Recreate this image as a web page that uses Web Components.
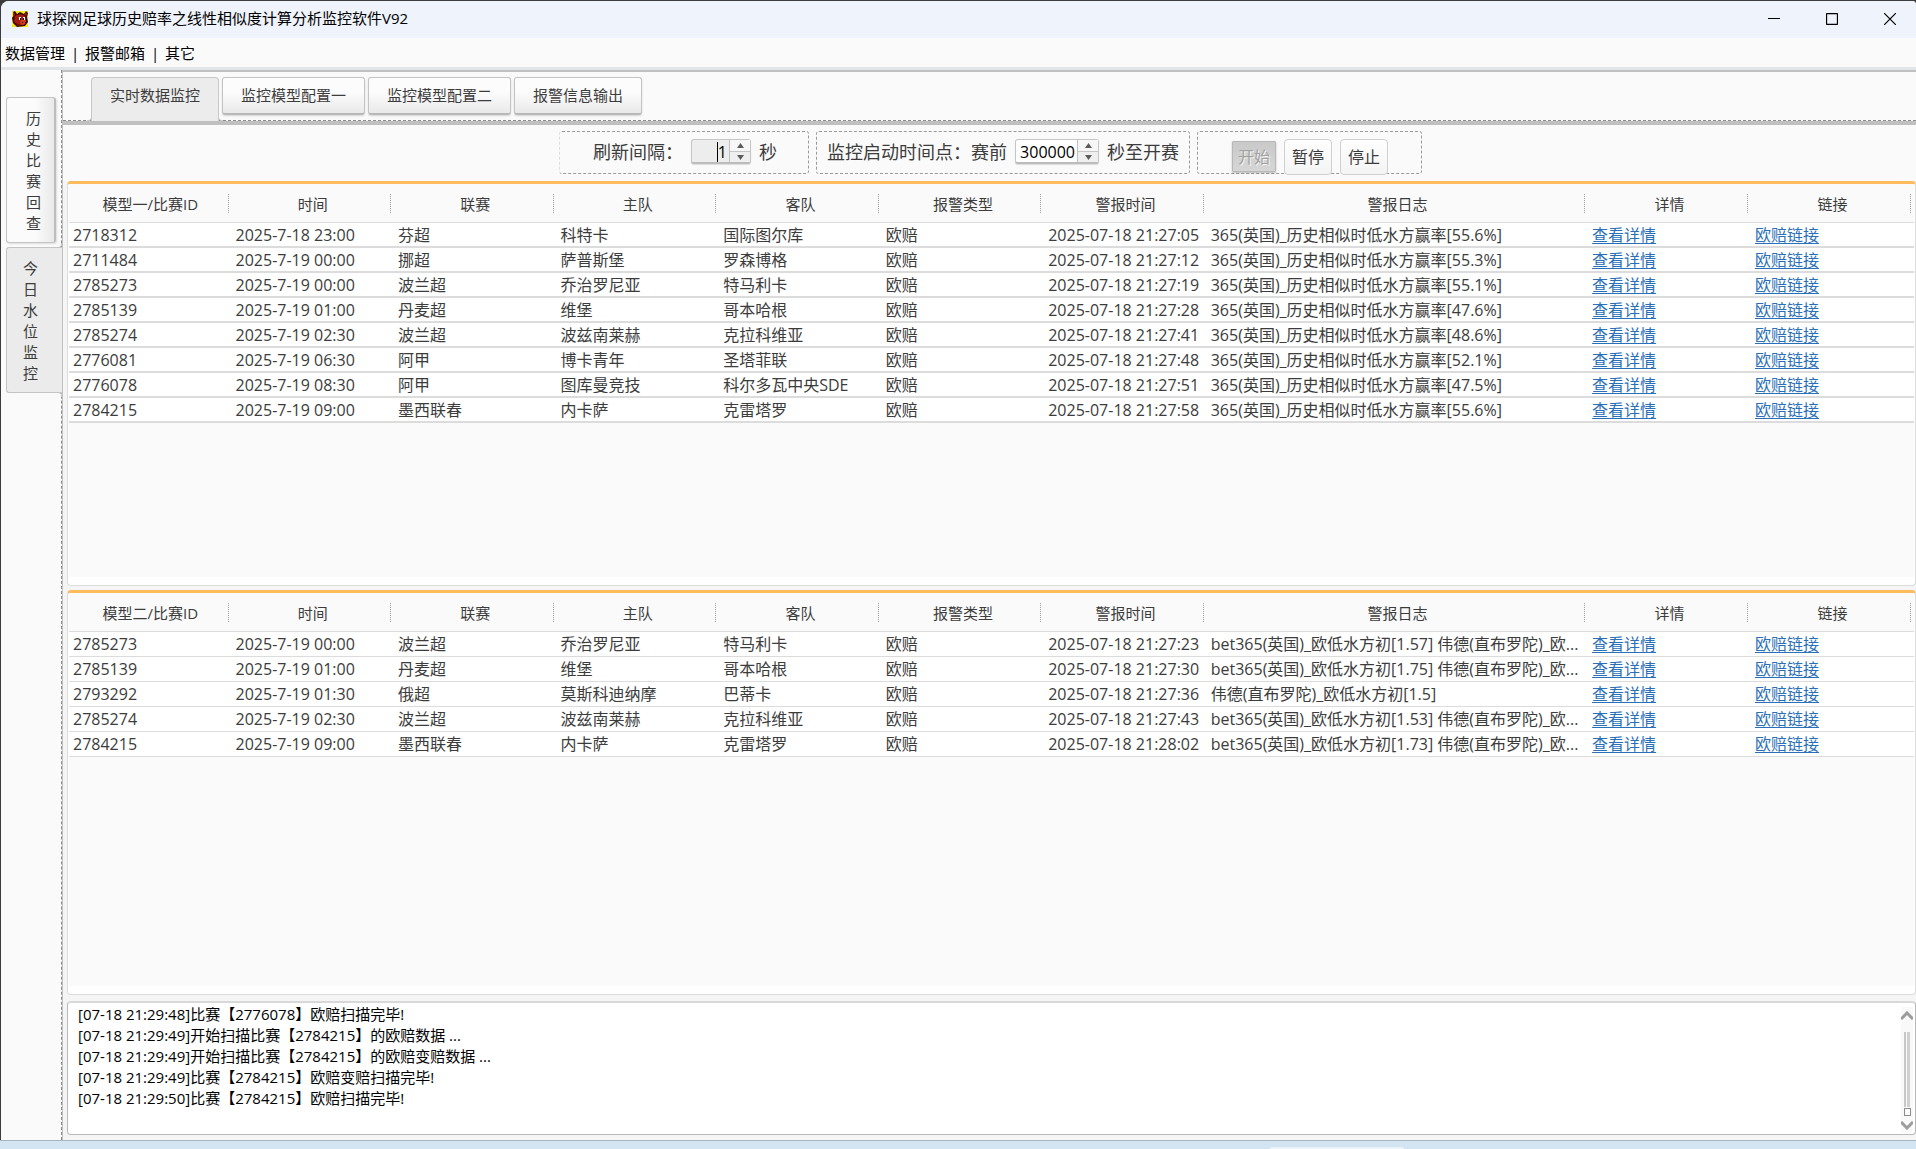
<!DOCTYPE html>
<html lang="zh-CN">
<head>
<meta charset="utf-8">
<title>球探网足球历史赔率之线性相似度计算分析监控软件V92</title>
<style>
    html, body {
        height: 100%;
        margin: 0;
        background: #d3e5f3;
    }

    body {
        font-family: "Open Sans", "Noto Sans CJK SC", sans-serif;
        font-size: 15px;
        line-height: 21px;
        color: #3c3c3c;
    }
</style>
</head>
<body>
<app-window></app-window>

<script>
const MODEL_ONE = [
    ['2718312', '2025-7-18 23:00', '芬超', '科特卡', '国际图尔库', '欧赔', '2025-07-18 21:27:05', '365(英国)_历史相似时低水方赢率[55.6%]'],
    ['2711484', '2025-7-19 00:00', '挪超', '萨普斯堡', '罗森博格', '欧赔', '2025-07-18 21:27:12', '365(英国)_历史相似时低水方赢率[55.3%]'],
    ['2785273', '2025-7-19 00:00', '波兰超', '乔治罗尼亚', '特马利卡', '欧赔', '2025-07-18 21:27:19', '365(英国)_历史相似时低水方赢率[55.1%]'],
    ['2785139', '2025-7-19 01:00', '丹麦超', '维堡', '哥本哈根', '欧赔', '2025-07-18 21:27:28', '365(英国)_历史相似时低水方赢率[47.6%]'],
    ['2785274', '2025-7-19 02:30', '波兰超', '波兹南莱赫', '克拉科维亚', '欧赔', '2025-07-18 21:27:41', '365(英国)_历史相似时低水方赢率[48.6%]'],
    ['2776081', '2025-7-19 06:30', '阿甲', '博卡青年', '圣塔菲联', '欧赔', '2025-07-18 21:27:48', '365(英国)_历史相似时低水方赢率[52.1%]'],
    ['2776078', '2025-7-19 08:30', '阿甲', '图库曼竞技', '科尔多瓦中央SDE', '欧赔', '2025-07-18 21:27:51', '365(英国)_历史相似时低水方赢率[47.5%]'],
    ['2784215', '2025-7-19 09:00', '墨西联春', '内卡萨', '克雷塔罗', '欧赔', '2025-07-18 21:27:58', '365(英国)_历史相似时低水方赢率[55.6%]']
];

const MODEL_TWO = [
    ['2785273', '2025-7-19 00:00', '波兰超', '乔治罗尼亚', '特马利卡', '欧赔', '2025-07-18 21:27:23', 'bet365(英国)_欧低水方初[1.57] 伟德(直布罗陀)_欧...'],
    ['2785139', '2025-7-19 01:00', '丹麦超', '维堡', '哥本哈根', '欧赔', '2025-07-18 21:27:30', 'bet365(英国)_欧低水方初[1.75] 伟德(直布罗陀)_欧...'],
    ['2793292', '2025-7-19 01:30', '俄超', '莫斯科迪纳摩', '巴蒂卡', '欧赔', '2025-07-18 21:27:36', '伟德(直布罗陀)_欧低水方初[1.5]'],
    ['2785274', '2025-7-19 02:30', '波兰超', '波兹南莱赫', '克拉科维亚', '欧赔', '2025-07-18 21:27:43', 'bet365(英国)_欧低水方初[1.53] 伟德(直布罗陀)_欧...'],
    ['2784215', '2025-7-19 09:00', '墨西联春', '内卡萨', '克雷塔罗', '欧赔', '2025-07-18 21:28:02', 'bet365(英国)_欧低水方初[1.73] 伟德(直布罗陀)_欧...']
];

const LOG_LINES = [
    '[07-18 21:29:48]比赛【2776078】欧赔扫描完毕!',
    '[07-18 21:29:49]开始扫描比赛【2784215】的欧赔数据 ...',
    '[07-18 21:29:49]开始扫描比赛【2784215】的欧赔变赔数据 ...',
    '[07-18 21:29:49]比赛【2784215】欧赔变赔扫描完毕!',
    '[07-18 21:29:50]比赛【2784215】欧赔扫描完毕!'
];

class TitleBar extends HTMLElement {
    constructor() {
        super();
        this.attachShadow({ mode: 'open' });
    }

    connectedCallback() {
        this.shadowRoot.innerHTML = `
            <style>
                :host {
                    display: flex;
                    align-items: center;
                    height: 35px;
                    padding: 0 0 2px 11px;
                    overflow: hidden;
                    background: #eff3fb;
                    color: #000;
                }

                .icon {
                    width: 16px;
                    height: 16px;
                    margin-right: 9px;
                }

                .title {
                    flex: 1;
                }

                button {
                    display: grid;
                    place-items: center;
                    width: 58px;
                    height: 35px;
                    padding: 0;
                    border: 0;
                    background: none;
                }

                button:last-child {
                    margin-right: -3px;
                }

                button:hover {
                    background: #dfe4ee;
                }

                button svg {
                    fill: none;
                    stroke: #000;
                }
            </style>

            <svg class="icon" viewBox="0 0 16 16">
                <rect width="16" height="16" fill="#f3ea1c"/>
                <path d="M1 1L3 0L5 3L8 1L12 3L14 0L16 2L15 6L16 11L13 15L5 16L1 12L0 7L2 4Z" fill="#3a0806"/>
                <path d="M2 1L3 4L2 6L1 4ZM14 1L15 3L14 5L12 4Z" fill="#8b1a10"/>
                <path d="M3 5Q7 2 11 4Q14 5 14 10Q13 14 9 14Q4 14 2 10Z" fill="#a31d12"/>
                <path d="M9 9Q12 8 14 10Q14 14 10 14Q7 12 9 9Z" fill="#d23c22"/>
                <path d="M4 12Q6 14 9 14L8 15L5 15Z" fill="#6d100b"/>
                <rect x="7" y="6" width="2" height="3" fill="#fff"/>
                <rect x="11" y="6" width="2" height="3" fill="#fff"/>
                <rect x="8" y="7" width="1" height="2" fill="#111"/>
                <rect x="11" y="7" width="1" height="2" fill="#111"/>
                <rect x="10" y="11" width="1" height="1" fill="#3a0806"/>
                <rect x="13" y="11" width="1" height="1" fill="#3a0806"/>
            </svg>
            <span class="title"><slot></slot></span>
            <button aria-label="最小化"><svg width="12" height="12"><path d="M0 5.5H12"/></svg></button>
            <button aria-label="最大化"><svg width="12" height="12"><rect x=".5" y=".5" width="11" height="11" rx="1" stroke-width="1.3"/></svg></button>
            <button aria-label="关闭"><svg width="12" height="12"><path d="M0 0L12 12M12 0L0 12" stroke-width="1.2"/></svg></button>
        `;
    }
}

class MenuBar extends HTMLElement {
    constructor() {
        super();
        this.attachShadow({ mode: 'open' });
    }

    connectedCallback() {
        const items = this.getAttribute('items').split(',');

        this.shadowRoot.innerHTML = `
            <style>
                :host {
                    display: flex;
                    align-items: center;
                    height: 27px;
                    padding: 2px 0 0 4px;
                    background: #fafafa;
                    border-bottom: 3px solid #e2e5e8;
                    color: #000;
                }

                button {
                    padding: 0;
                    border: 0;
                    background: none;
                    font: inherit;
                    color: inherit;
                }

                span {
                    width: 20px;
                    text-align: center;
                }
            </style>
            ${items.map(item => `<button>${item}</button>`).join('<span>|</span>')}
        `;
    }
}

class SideTabs extends HTMLElement {
    constructor() {
        super();
        this.attachShadow({ mode: 'open' });
    }

    connectedCallback() {
        this.shadowRoot.innerHTML = `
            <style>
                :host {
                    display: flex;
                    flex-direction: column;
                    gap: 4px;
                    box-sizing: border-box;
                    width: 61px;
                    padding: 27px 0 0 5px;
                    background: #fafafa;
                    border-right: 1px dashed #8c8c8c;
                }

                button {
                    position: relative;
                    display: flex;
                    align-items: center;
                    justify-content: center;
                    width: 50px;
                    height: 146px;
                    padding: 2px 0 0 6px;
                    border: 1px solid #c4c4c4;
                    border-right: 2px solid #bdbdbd;
                    border-radius: 3px;
                    background: linear-gradient(90deg, #fbfbfb 60%, #e9e9e9);
                    box-shadow: 1px 1px 2px rgba(0, 0, 0, 0.12);
                    font: inherit;
                    color: inherit;
                }

                button span {
                    width: 15px;
                    word-break: break-all;
                }

                /* the selected tab runs into the pane edge */
                button.active {
                    width: 56px;
                    margin-right: -1px;
                    padding: 2px 8px 0 0;
                    border-right: 0;
                    border-radius: 3px 0 0 3px;
                    background: #ebebeb;
                    box-shadow: none;
                }

                button.active::before,
                button.active::after {
                    content: "";
                    position: absolute;
                    right: 0;
                    width: 4px;
                    height: 4px;
                    border-right: 1px solid #c4c4c4;
                    background: #fafafa;
                }

                button.active::before {
                    top: -5px;
                    border-bottom: 1px solid #c4c4c4;
                    border-bottom-right-radius: 4px;
                }

                button.active::after {
                    bottom: -5px;
                    border-top: 1px solid #c4c4c4;
                    border-top-right-radius: 4px;
                }
            </style>
            <button><span>历史比赛回查</span></button>
            <button class="active"><span>今日水位监控</span></button>
        `;
    }
}

class TabStrip extends HTMLElement {
    constructor() {
        super();
        this.attachShadow({ mode: 'open' });
    }

    connectedCallback() {
        const tabs = this.getAttribute('tabs').split(',');

        this.shadowRoot.innerHTML = `
            <style>
                :host {
                    display: block;
                    border-top: 2px solid #c0c0c0;
                    border-bottom: 4px solid #c0c0c0;
                    background: #fafafa;
                }

                nav {
                    display: flex;
                    align-items: flex-start;
                    gap: 3px;
                    height: 43px;
                    padding: 5px 0 0 28px;
                    border-bottom: 1px dashed #8c8c8c;
                }

                button {
                    position: relative;
                    height: 38px;
                    padding: 0 18px;
                    border: 1px solid #c4c4c4;
                    border-bottom: 2px solid #b8b8b8;
                    border-radius: 3px;
                    background: linear-gradient(#fcfcfc 40%, #e9e9e9);
                    box-shadow: 0 1px 2px rgba(0, 0, 0, 0.15);
                    font: inherit;
                    color: inherit;
                }

                button.active {
                    height: 44px;
                    padding-bottom: 8px;
                    border-color: #c8c8c8;
                    border-bottom: 0;
                    border-radius: 4px 4px 0 0;
                    background: #ececec;
                    box-shadow: none;
                }

                button.active::before,
                button.active::after {
                    content: "";
                    position: absolute;
                    bottom: 0;
                    width: 4px;
                    height: 4px;
                    border-bottom: 1px solid #c8c8c8;
                    background: #fafafa;
                }

                button.active::before {
                    left: -5px;
                    border-right: 1px solid #c8c8c8;
                    border-bottom-right-radius: 4px;
                }

                button.active::after {
                    right: -5px;
                    border-left: 1px solid #c8c8c8;
                    border-bottom-left-radius: 4px;
                }
            </style>
            <nav>
                ${tabs.map((tab, i) => `<button class="${i === 0 ? 'active' : ''}">${tab}</button>`).join('')}
            </nav>
        `;

        this.shadowRoot.querySelectorAll('button').forEach(button => {
            button.addEventListener('click', () => {
                this.shadowRoot.querySelector('.active').classList.remove('active');
                button.classList.add('active');
            });
        });
    }
}

class SpinBox extends HTMLElement {
    constructor() {
        super();
        this.attachShadow({ mode: 'open' });
    }

    connectedCallback() {
        const value = this.getAttribute('value') || '0';
        const label = this.getAttribute('label') || '';

        this.shadowRoot.innerHTML = `
            <style>
                :host {
                    position: relative;
                    display: inline-flex;
                    box-sizing: border-box;
                    height: 25px;
                    border: 1px solid #c6c6c6;
                    border-bottom: 2px solid #bcbcbc;
                    border-radius: 3px;
                    background: #fff;
                    box-shadow: 0 1px 1px rgba(0, 0, 0, 0.12);
                }

                input {
                    box-sizing: border-box;
                    width: var(--field-width, 61px);
                    padding: 2px 2px 0 0;
                    border: 0;
                    outline: 0;
                    background: none;
                    font: 16px/20px "Open Sans", "Noto Sans CJK SC", sans-serif;
                    text-align: right;
                    color: #000;
                    appearance: textfield;
                    -moz-appearance: textfield;
                }

                input::-webkit-inner-spin-button {
                    display: none;
                }

                :host([editing]) {
                    background: #ededed;
                }

                /* insertion caret in front of the digit */
                :host([editing])::before {
                    content: "";
                    position: absolute;
                    left: 25px;
                    top: 2px;
                    width: 1px;
                    height: 20px;
                    background: #000;
                }

                .arrows {
                    display: grid;
                    grid-template-rows: 1fr 1fr;
                    width: 20px;
                    border-left: 1px solid #c0c0c0;
                }

                button {
                    display: grid;
                    place-items: center;
                    padding: 0;
                    border: 0;
                    background: #f7f7f7;
                }

                button + button {
                    border-top: 1px solid #c6c6c6;
                    background: #efefef;
                }

                svg {
                    fill: #5c5c5c;
                }
            </style>
            <input type="number" value="${value}" aria-label="${label}">
            <div class="arrows">
                <button class="up" aria-label="增加"><svg width="7" height="5"><path d="M0 5L3.5 0L7 5Z"/></svg></button>
                <button class="down" aria-label="减少"><svg width="7" height="5"><path d="M0 0L3.5 5L7 0Z"/></svg></button>
            </div>
        `;

        const input = this.shadowRoot.querySelector('input');
        this.shadowRoot.querySelector('.up').addEventListener('click', () => input.stepUp());
        this.shadowRoot.querySelector('.down').addEventListener('click', () => input.stepDown());
    }
}

class MonitorToolbar extends HTMLElement {
    constructor() {
        super();
        this.attachShadow({ mode: 'open' });
    }

    connectedCallback() {
        this.shadowRoot.innerHTML = `
            <style>
                :host {
                    display: flex;
                    justify-content: center;
                    gap: 7px;
                    padding: 6px 0 7px 2px;
                    background: #fafafa;
                    font-size: 18px;
                    line-height: 26px;
                }

                .group {
                    display: flex;
                    align-items: flex-start;
                    box-sizing: border-box;
                    height: 43px;
                    padding-top: 7px;
                    border: 1px dashed #9a9a9a;
                    border-radius: 3px;
                    white-space: nowrap;
                }

                .interval {
                    padding-left: 33px;
                    padding-right: 31px;
                    border-left-color: #dedede;
                }

                .start {
                    padding-left: 10px;
                    padding-right: 10px;
                }

                .commands {
                    gap: 8px;
                    padding-left: 34px;
                    padding-right: 33px;
                }

                spin-box {
                    margin: 0 8px;
                }

                .interval spin-box {
                    --field-width: 37px;
                }

                button {
                    width: 48px;
                    height: 36px;
                    padding: 0;
                    border: 1px solid #d0d0d0;
                    border-radius: 4px;
                    background: linear-gradient(#fefefe, #f4f4f4);
                    font: inherit;
                    font-size: 16px;
                    color: inherit;
                }

                button:disabled {
                    width: 44px;
                    height: 31px;
                    margin-top: 2px;
                    border-color: #b8b8b8;
                    border-radius: 1px;
                    background: linear-gradient(#c9c9c9, #d6d6d6);
                    box-shadow: 0 1px 2px rgba(0, 0, 0, 0.25);
                    color: #a2a2a2;
                    line-height: 24px;
                    text-shadow: 1px 1px 0 #f4f4f4;
                }
            </style>

            <div class="group interval">
                <span>刷新间隔：</span>
                <spin-box value="1" label="刷新间隔" editing></spin-box>
                <span>秒</span>
            </div>
            <div class="group start">
                <span>监控启动时间点：赛前</span>
                <spin-box value="300000" label="监控启动时间点"></spin-box>
                <span>秒至开赛</span>
            </div>
            <div class="group commands">
                <button disabled>开始</button>
                <button>暂停</button>
                <button>停止</button>
            </div>
        `;
    }
}

class MatchTable extends HTMLElement {
    constructor() {
        super();
        this.attachShadow({ mode: 'open' });
        this.rows = [];
    }

    connectedCallback() {
        this.render();
    }

    render() {
        const heads = [this.getAttribute('model') + '/比赛ID', '时间', '联赛', '主队', '客队', '报警类型', '警报时间', '警报日志', '详情', '链接'];

        this.shadowRoot.innerHTML = `
            <style>
                :host {
                    display: flex;
                    flex-direction: column;
                    box-sizing: border-box;
                    min-height: 0;
                    padding: 0 1px 8px;
                    border: 1px solid #dcdcdc;
                    border-top: 3px solid #ffbb5c;
                    border-radius: 4px;
                    background: #fff;
                }

                .body {
                    flex: 1;
                    min-height: 0;
                    overflow: hidden;
                    background: #fafafa;
                }

                table {
                    width: 100%;
                    table-layout: fixed;
                    border-collapse: separate;
                    border-spacing: 0;
                }

                col { width: 8.81%; }
                col.log { width: 20.67%; }
                col.action { width: 8.83%; }

                th {
                    height: 36px;
                    padding: 2px 0 0;
                    border-bottom: 1px solid #dcdcdc;
                    background: repeating-linear-gradient(#a4a4a4 0 1px, #f4f4f4 1px 2px) right 3px center / 1px 19px no-repeat;
                    font-size: 15px;
                    font-weight: normal;
                    line-height: 21px;
                }

                td {
                    box-sizing: border-box;
                    height: 25px;
                    padding: var(--row-pad, 0) 4px 0;
                    border-bottom: var(--row-line, 1px) solid #dcdcdc;
                    background: #fff;
                    font-size: 16px;
                    line-height: 21px;
                    white-space: nowrap;
                }

                a {
                    color: #2a70b8;
                    text-underline-offset: 2px;
                }
            </style>

            <div class="body">
                <table>
                    <colgroup>
                        <col span="7">
                        <col class="log">
                        <col span="2" class="action">
                    </colgroup>
                    <thead>
                        <tr>${heads.map(head => `<th>${head}</th>`).join('')}</tr>
                    </thead>
                    <tbody>
                        ${this.rows.map(row => `
                            <tr>
                                ${row.map(cell => `<td>${cell}</td>`).join('')}
                                <td><a href="#detail-${row[0]}">查看详情</a></td>
                                <td><a href="#odds-${row[0]}">欧赔链接</a></td>
                            </tr>
                        `).join('')}
                    </tbody>
                </table>
            </div>
        `;
    }
}

class LogBox extends HTMLElement {
    constructor() {
        super();
        this.attachShadow({ mode: 'open' });
    }

    connectedCallback() {
        this.shadowRoot.innerHTML = `
            <style>
                :host {
                    display: flex;
                    box-sizing: border-box;
                    height: 134px;
                    border: 1px solid #b8b8b8;
                    border-top: 2px solid #d8d8d8;
                    border-radius: 4px;
                    background: #fff;
                }

                textarea {
                    flex: 1;
                    box-sizing: border-box;
                    padding: 1px 0 0 10px;
                    border: 0;
                    outline: 0;
                    background: none;
                    resize: none;
                    overflow: hidden;
                    font: inherit;
                    color: #000;
                }

                .scroll {
                    display: flex;
                    flex-direction: column;
                    align-items: center;
                    width: 12px;
                    margin: 4px 2px 1px;
                    background: #f9f9f9;
                }

                button {
                    display: grid;
                    place-items: center;
                    width: 12px;
                    height: 16px;
                    padding: 0;
                    border: 0;
                    background: none;
                }

                button svg {
                    fill: none;
                    stroke: #9c9c9c;
                    stroke-width: 3;
                }

                .track {
                    flex: 1;
                    box-sizing: border-box;
                    width: 6px;
                    margin-top: 9px;
                    border-left: 2px solid #c8c8c8;
                    border-right: 3px solid #d0d0d0;
                }

                .thumb {
                    box-sizing: border-box;
                    width: 7px;
                    height: 8px;
                    margin: 1px 0;
                    border: 1px solid #8c8c8c;
                    background: #fff;
                }
            </style>
            <textarea readonly aria-label="日志">${LOG_LINES.join('\n')}</textarea>
            <div class="scroll">
                <button class="up" aria-label="向上"><svg width="12" height="9"><path d="M0 8L6 2L12 8"/></svg></button>
                <div class="track"></div>
                <div class="thumb"></div>
                <button class="down" aria-label="向下"><svg width="12" height="9"><path d="M0 1L6 7L12 1"/></svg></button>
            </div>
        `;

        const area = this.shadowRoot.querySelector('textarea');
        this.shadowRoot.querySelector('.up').addEventListener('click', () => { area.scrollTop -= 21; });
        this.shadowRoot.querySelector('.down').addEventListener('click', () => { area.scrollTop += 21; });
    }
}

class AppWindow extends HTMLElement {
    constructor() {
        super();
        this.attachShadow({ mode: 'open' });
    }

    connectedCallback() {
        this.shadowRoot.innerHTML = `
            <style>
                :host {
                    display: flex;
                    flex-direction: column;
                    height: 100vh;
                    background: #3c3c3c;
                }

                .window {
                    flex: 1;
                    display: flex;
                    flex-direction: column;
                    min-height: 0;
                    margin: 1px 0 0 1px;
                    border-radius: 8px 4px 0 0;
                    overflow: hidden;
                    background: #fafafa;
                }

                .main {
                    flex: 1;
                    display: flex;
                    min-height: 0;
                }

                .pane {
                    flex: 1;
                    display: flex;
                    flex-direction: column;
                    min-width: 0;
                    border-left: 1px solid #c0c0c0;
                }

                .content {
                    flex: 1;
                    display: flex;
                    flex-direction: column;
                    min-height: 0;
                    padding: 0 0 5px 4px;
                    background: #f5f5f5;
                }

                .content match-table {
                    flex: 1 1 0;
                }

                .first {
                    --row-line: 2px;
                    --row-pad: 2px;
                    margin-bottom: 4px;
                }

                log-box {
                    margin-top: 6px;
                }

                .desktop {
                    display: flex;
                    justify-content: flex-end;
                    align-items: flex-end;
                    height: 8px;
                    border-top: 1px solid #a9b4bd;
                    background: #d3e5f3;
                }

                .desktop i {
                    width: 7%;
                    height: 2px;
                    margin-right: 26.7%;
                    border-radius: 4px 4px 0 0;
                    background: #ebf3f9;
                }
            </style>

            <div class="window">
                <title-bar>球探网足球历史赔率之线性相似度计算分析监控软件V92</title-bar>
                <menu-bar items="数据管理,报警邮箱,其它"></menu-bar>
                <div class="main">
                    <side-tabs></side-tabs>
                    <div class="pane">
                        <tab-strip tabs="实时数据监控,监控模型配置一,监控模型配置二,报警信息输出"></tab-strip>
                        <monitor-toolbar></monitor-toolbar>
                        <div class="content">
                            <match-table class="first" model="模型一"></match-table>
                            <match-table class="second" model="模型二"></match-table>
                            <log-box></log-box>
                        </div>
                    </div>
                </div>
            </div>
            <div class="desktop"><i></i></div>
        `;

        const first = this.shadowRoot.querySelector('.first');
        const second = this.shadowRoot.querySelector('.second');
        first.rows = MODEL_ONE;
        second.rows = MODEL_TWO;
        first.render();
        second.render();
    }
}

customElements.define('title-bar', TitleBar);
customElements.define('menu-bar', MenuBar);
customElements.define('side-tabs', SideTabs);
customElements.define('tab-strip', TabStrip);
customElements.define('spin-box', SpinBox);
customElements.define('monitor-toolbar', MonitorToolbar);
customElements.define('match-table', MatchTable);
customElements.define('log-box', LogBox);
customElements.define('app-window', AppWindow);
</script>
</body>
</html>
